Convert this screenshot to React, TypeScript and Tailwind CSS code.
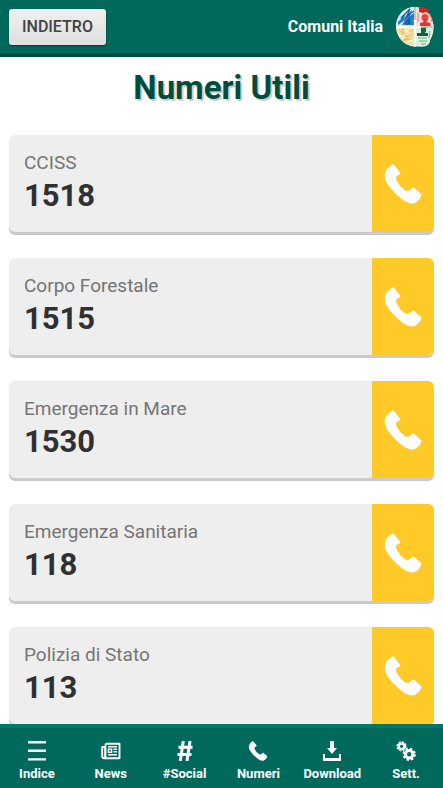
import type { ReactNode } from 'react';

interface UsefulNumber {
  name: string;
  phone: string;
}

interface NavItem {
  label: string;
  icon: ReactNode;
}

const NUMBERS: UsefulNumber[] = [
  { name: 'CCISS', phone: '1518' },
  { name: 'Corpo Forestale', phone: '1515' },
  { name: 'Emergenza in Mare', phone: '1530' },
  { name: 'Emergenza Sanitaria', phone: '118' },
  { name: 'Polizia di Stato', phone: '113' },
];

function PhoneIcon({ className }: { className: string }) {
  return (
    <svg viewBox="0 0 112 120" className={className} fill="currentColor" aria-hidden="true">
      <path d="M23 2Q27-1 30 4L47 26Q49 29 46 31L36 37Q33 42 38 52Q46 68 60 77Q68 82 73 80L84 72Q87 70 90 72L110 90Q113 93 110 97Q104 112 89 118Q73 121 52 105Q15 75 3 48Q-1 34 4 22Q10 9 23 2Z" />
    </svg>
  );
}

function MenuIcon() {
  return (
    <svg viewBox="0 0 20 20" className="h-5 w-5" fill="currentColor" aria-hidden="true">
      <path d="M1 0h18v2.400H1zM1 8.600h18V11H1zM1 17.200h18v2.400H1z" />
    </svg>
  );
}

function NewsIcon() {
  return (
    <svg viewBox="0 0 20 20" className="h-5 w-5" fill="none" stroke="currentColor" aria-hidden="true">
      <path d="M4.500 2.800h14v14.400H3Q1.200 17.200 1.200 15.500V6h3v9.700Q4.200 17.200 3 17.200" strokeWidth="1.900" strokeLinejoin="round" />
      <path d="M4.500 2.800V16" strokeWidth="1.600" />
      <path d="M7 5.800h9M12.500 8.200H16M12.500 10.800H16M7 13.800h9" strokeWidth="1.400" />
      <path d="M7.400 8.300h3.200v2.900H7.400z" strokeWidth="1.400" />
    </svg>
  );
}

function HashIcon() {
  return (
    <svg viewBox="0 0 20 20" className="h-5 w-5" fill="none" stroke="currentColor" aria-hidden="true">
      <path d="M8.300 0 5.300 20M15 0l-3 20M3.500 6.200h14M2.500 13.600h14" strokeWidth="3" />
    </svg>
  );
}

function DownloadIcon() {
  return (
    <svg viewBox="0 0 20 20" className="h-5 w-5" fill="currentColor" aria-hidden="true">
      <path d="M8 0h4v7h3l-5 6-5-6h3z" />
      <path d="M1 13h2v4h14v-4h2v7H1z" />
    </svg>
  );
}

function GearsIcon() {
  return (
    <svg viewBox="0 0 20 20" className="h-5 w-5" fill="none" stroke="currentColor" aria-hidden="true">
      <circle cx="5.500" cy="5.300" r="2.800" strokeWidth="2.400" />
      <circle cx="5.500" cy="5.300" r="4.200" strokeWidth="1.800" strokeDasharray="1.900 1.400" />
      <circle cx="13.200" cy="13.300" r="3.700" strokeWidth="3" />
      <circle cx="13.200" cy="13.300" r="5.500" strokeWidth="2.200" strokeDasharray="2.400 1.920" />
    </svg>
  );
}

function Logo() {
  return (
    <svg viewBox="0 0 38 42" className="h-[42px] w-[38px]" aria-hidden="true">
      <path d="M18.500 1C8 1 0 10 0 20.500S9 40.500 19 40.500C24 40.500 27 41 30 40Q34 38 34 34C37 29 38 24 37.500 19C36 10 29 1 18.500 1Z" fill="#f4faf5" />
      {/* blue sky */}
      <path d="M18 1C8 1.500 1 9 .5 20H18z" fill="#d5eaf7" />
      <path d="M2 16 10 7l-2 5 8-8-2 6 4-3v5l-6 5 6-2v4H6l3-5-7 5z" fill="#257cc2" />
      <path d="M5 12 14 3l-3 7 7-5M9 18l5-6-2 6 6-5" fill="none" stroke="#1456a0" strokeWidth="1.200" />
      {/* orange corner */}
      <path d="M.5 22H18v18C9 40 1 32 .5 22Z" fill="#fae3a4" />
      <path d="m3 24 5 3-4 2 7 1-3 4 7-1-1 5M6 23l6 4 5-3M11 31l6-3M8 35l3-3" fill="none" stroke="#f0b56c" strokeWidth="1.100" />
      <path d="m3 29 6 2M9 24l4 3M12 36l5-2" stroke="#fff8df" strokeWidth="2" />
      {/* red figure */}
      <path d="M20 1.300C29 2 36 9 37.500 20H20Z" fill="#f9dfd4" />
      <path d="m23 2 4-1 5 2 1 4-3-1-3 1-4-1z" fill="#cf242a" />
      <circle cx="29" cy="11.500" r="3.500" fill="#e64642" />
      <path d="M27.500 13h3v3l4 1v3H24v-3l3.500-1z" fill="#df3538" />
      <path d="m33 7 3 6-1 3M22 7v9" fill="none" stroke="#e97770" />
      {/* green stamp */}
      <path d="M20 22h17q0 7-3 12-1 6-7 6h-7z" fill="#dcf0dd" />
      <path d="M25 21h5v4l-1 2h3v3H21v-3h4z" fill="#12633b" />
      <path d="M22 32h9M23 35h8M25 38h5M34 25l-1 7" stroke="#66b684" />
      <path d="M19 1v40M0 21h37.500" stroke="#ffffff" strokeWidth="1.300" />
      <path d="M19 1v13M25 21h12" stroke="#257c61" strokeWidth=".700" />
    </svg>
  );
}

const NAV_ITEMS: NavItem[] = [
  { label: 'Indice', icon: <MenuIcon /> },
  { label: 'News', icon: <NewsIcon /> },
  { label: '#Social', icon: <HashIcon /> },
  { label: 'Numeri', icon: <PhoneIcon className="h-5 w-5" /> },
  { label: 'Download', icon: <DownloadIcon /> },
  { label: 'Sett.', icon: <GearsIcon /> },
];

function NumberCard({ name, phone }: UsefulNumber) {
  return (
    <li className="flex h-[97px] overflow-hidden rounded-md bg-[#eeeeee] shadow-[0_3px_0_#cacaca]">
      <div className="flex-1 px-[15px] pt-4">
        <h2 className="text-[19px] leading-6 text-[#757575]">{name}</h2>
        <p className="text-[31px] leading-[42px] font-bold text-[#303030]">{phone}</p>
      </div>
      <a
        href={`tel:${phone}`}
        aria-label={`Chiama ${name}`}
        className="flex w-[62px] items-center justify-center bg-[#ffca28] text-white"
      >
        <PhoneIcon className="h-10 w-10" />
      </a>
    </li>
  );
}

export default function App() {
  return (
    <div className="h-screen overflow-hidden bg-white font-[Roboto,sans-serif]">
      <header className="flex h-[57px] items-center justify-between border-b-4 border-[#004d40] bg-[#00695c] px-[9px]">
        <button
          type="button"
          className="h-9 rounded-[3px] bg-linear-to-b from-[#f0f0f0] to-[#dedede] px-[13px] text-base font-medium text-[#424242] shadow-[0_1px_2px_#003d34]"
        >
          INDIETRO
        </button>
        <div className="flex items-center gap-[13px]">
          <span className="text-base font-bold text-white">Comuni Italia</span>
          <Logo />
        </div>
      </header>

      <main className="px-[9px] pb-20">
        <h1 className="pt-2 text-center text-[33px] leading-[46px] font-bold text-[#004d40] [text-shadow:2px_2px_1px_#cccccc]">
          Numeri Utili
        </h1>
        <ul className="mt-6 space-y-[26px]">
          {NUMBERS.map((item) => (
            <NumberCard key={item.phone} {...item} />
          ))}
        </ul>
      </main>

      <nav className="fixed inset-x-0 bottom-0 grid h-16 grid-cols-6 border-t-4 border-[#00796b] bg-[#00695c] text-white">
        {NAV_ITEMS.map(({ label, icon }) => (
          <a key={label} href="#" className="flex flex-col items-center gap-[5px] pt-[13px] text-[13px] leading-4 font-bold">
            {icon}
            {label}
          </a>
        ))}
      </nav>
    </div>
  );
}
